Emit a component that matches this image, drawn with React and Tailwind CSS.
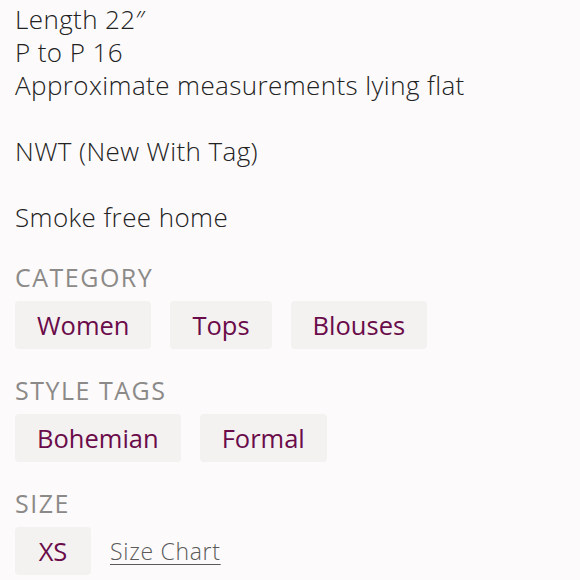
import React from "react";

const Tag = ({ children, className = "" }) => (
  <div className={"h-[48px] px-[22px] flex items-center justify-center rounded-[4px] bg-[#f4f2f0] text-[#6a0c4a] text-[25.5px] font-normal " + className}>
    {children}
  </div>
);

const Label = ({ children }) => (
  <div className="text-[#8c8a88] text-[25px] leading-[30px] uppercase font-normal tracking-[1.5px]">{children}</div>
);

export default function App() {
  return (
    <div className="w-[580px] h-[580px] overflow-hidden bg-[#fcfafb] px-[15px] text-[#222222] font-[350]" style={{ fontFamily: "'Open Sans', sans-serif" }}>
      <div className="text-[26px] leading-[33px] pt-[3px] tracking-[0.4px]">
        <div>Length 22″</div>
        <div>P to P 16</div>
        <div>Approximate measurements lying flat</div>
        <div className="h-[33px]" />
        <div>NWT (New With Tag)</div>
        <div className="h-[33px]" />
        <div>Smoke free home</div>
      </div>
      <div className="mt-[28px]">
        <Label>Category</Label>
        <div className="flex gap-[19px] mt-[9px]">
          <Tag>Women</Tag>
          <Tag>Tops</Tag>
          <Tag>Blouses</Tag>
        </div>
      </div>
      <div className="mt-[26px]">
        <Label>Style Tags</Label>
        <div className="flex gap-[19px] mt-[9px]">
          <Tag>Bohemian</Tag>
          <Tag>Formal</Tag>
        </div>
      </div>
      <div className="mt-[26px]">
        <Label>Size</Label>
        <div className="flex items-center gap-[19px] mt-[9px]">
          <Tag className="w-[76px]">XS</Tag>
          <span className="text-[23px] tracking-[0.7px] text-[#5a5a5a] underline underline-offset-[4px] decoration-1">Size Chart</span>
        </div>
      </div>
    </div>
  );
}
